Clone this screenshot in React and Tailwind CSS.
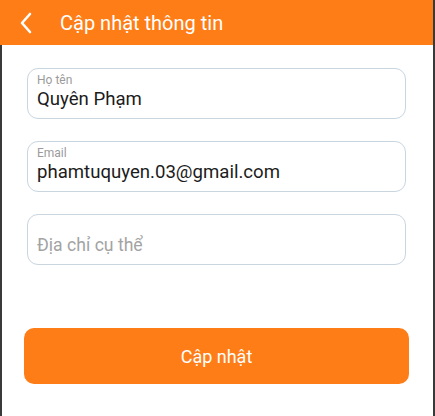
import React from "react";

function Field({ label, value, placeholder }) {
  return (
    <div className="h-[51px] rounded-[11px] border border-[#c9d5df] px-[9px] flex flex-col justify-center">
      <div className="text-[12px] leading-[14px] text-[#9b9b9b] -mt-[4px]">{label || "\u00a0"}</div>
      {value ? (
        <div className="text-[18.6px] leading-[24px] text-[#1c1c1c]">{value}</div>
      ) : (
        <div className="text-[17.6px] leading-[24px] text-[#a3a3a3]">{placeholder}</div>
      )}
    </div>
  );
}

export default function App() {
  return (
    <div className="w-[435px] h-[416px] bg-[#3a3a3a] flex flex-col" style={{ fontFamily: "Roboto, 'Noto Sans', sans-serif" }}>
      <div className="h-[45px] mr-[2px] bg-[#fe7d17] flex items-center shrink-0">
        <svg width="14" height="22" viewBox="0 0 14 22" className="ml-[19px]">
          <path d="M11 2 L3 11 L11 20" fill="none" stroke="white" strokeWidth="2.6" strokeLinecap="round" strokeLinejoin="round" />
        </svg>
        <div className="ml-[27px] text-white text-[20px] leading-none">Cập nhật thông tin</div>
      </div>
      <div className="flex-1 mx-[2px] bg-white flex flex-col">
        <div className="pt-[23px] pl-[25px] pr-[27px] flex flex-col gap-[22px]">
          <Field label="Họ tên" value="Quyên Phạm" />
          <Field label="Email" value="phamtuquyen.03@gmail.com" />
          <Field placeholder="Địa chỉ cụ thể" />
        </div>
        <div className="mt-[63px] pl-[22px] pr-[24px]">
          <div className="h-[56px] rounded-[10px] bg-[#fe7d17] flex items-center justify-center text-white text-[18px]">
            Cập nhật
          </div>
        </div>
      </div>
    </div>
  );
}
